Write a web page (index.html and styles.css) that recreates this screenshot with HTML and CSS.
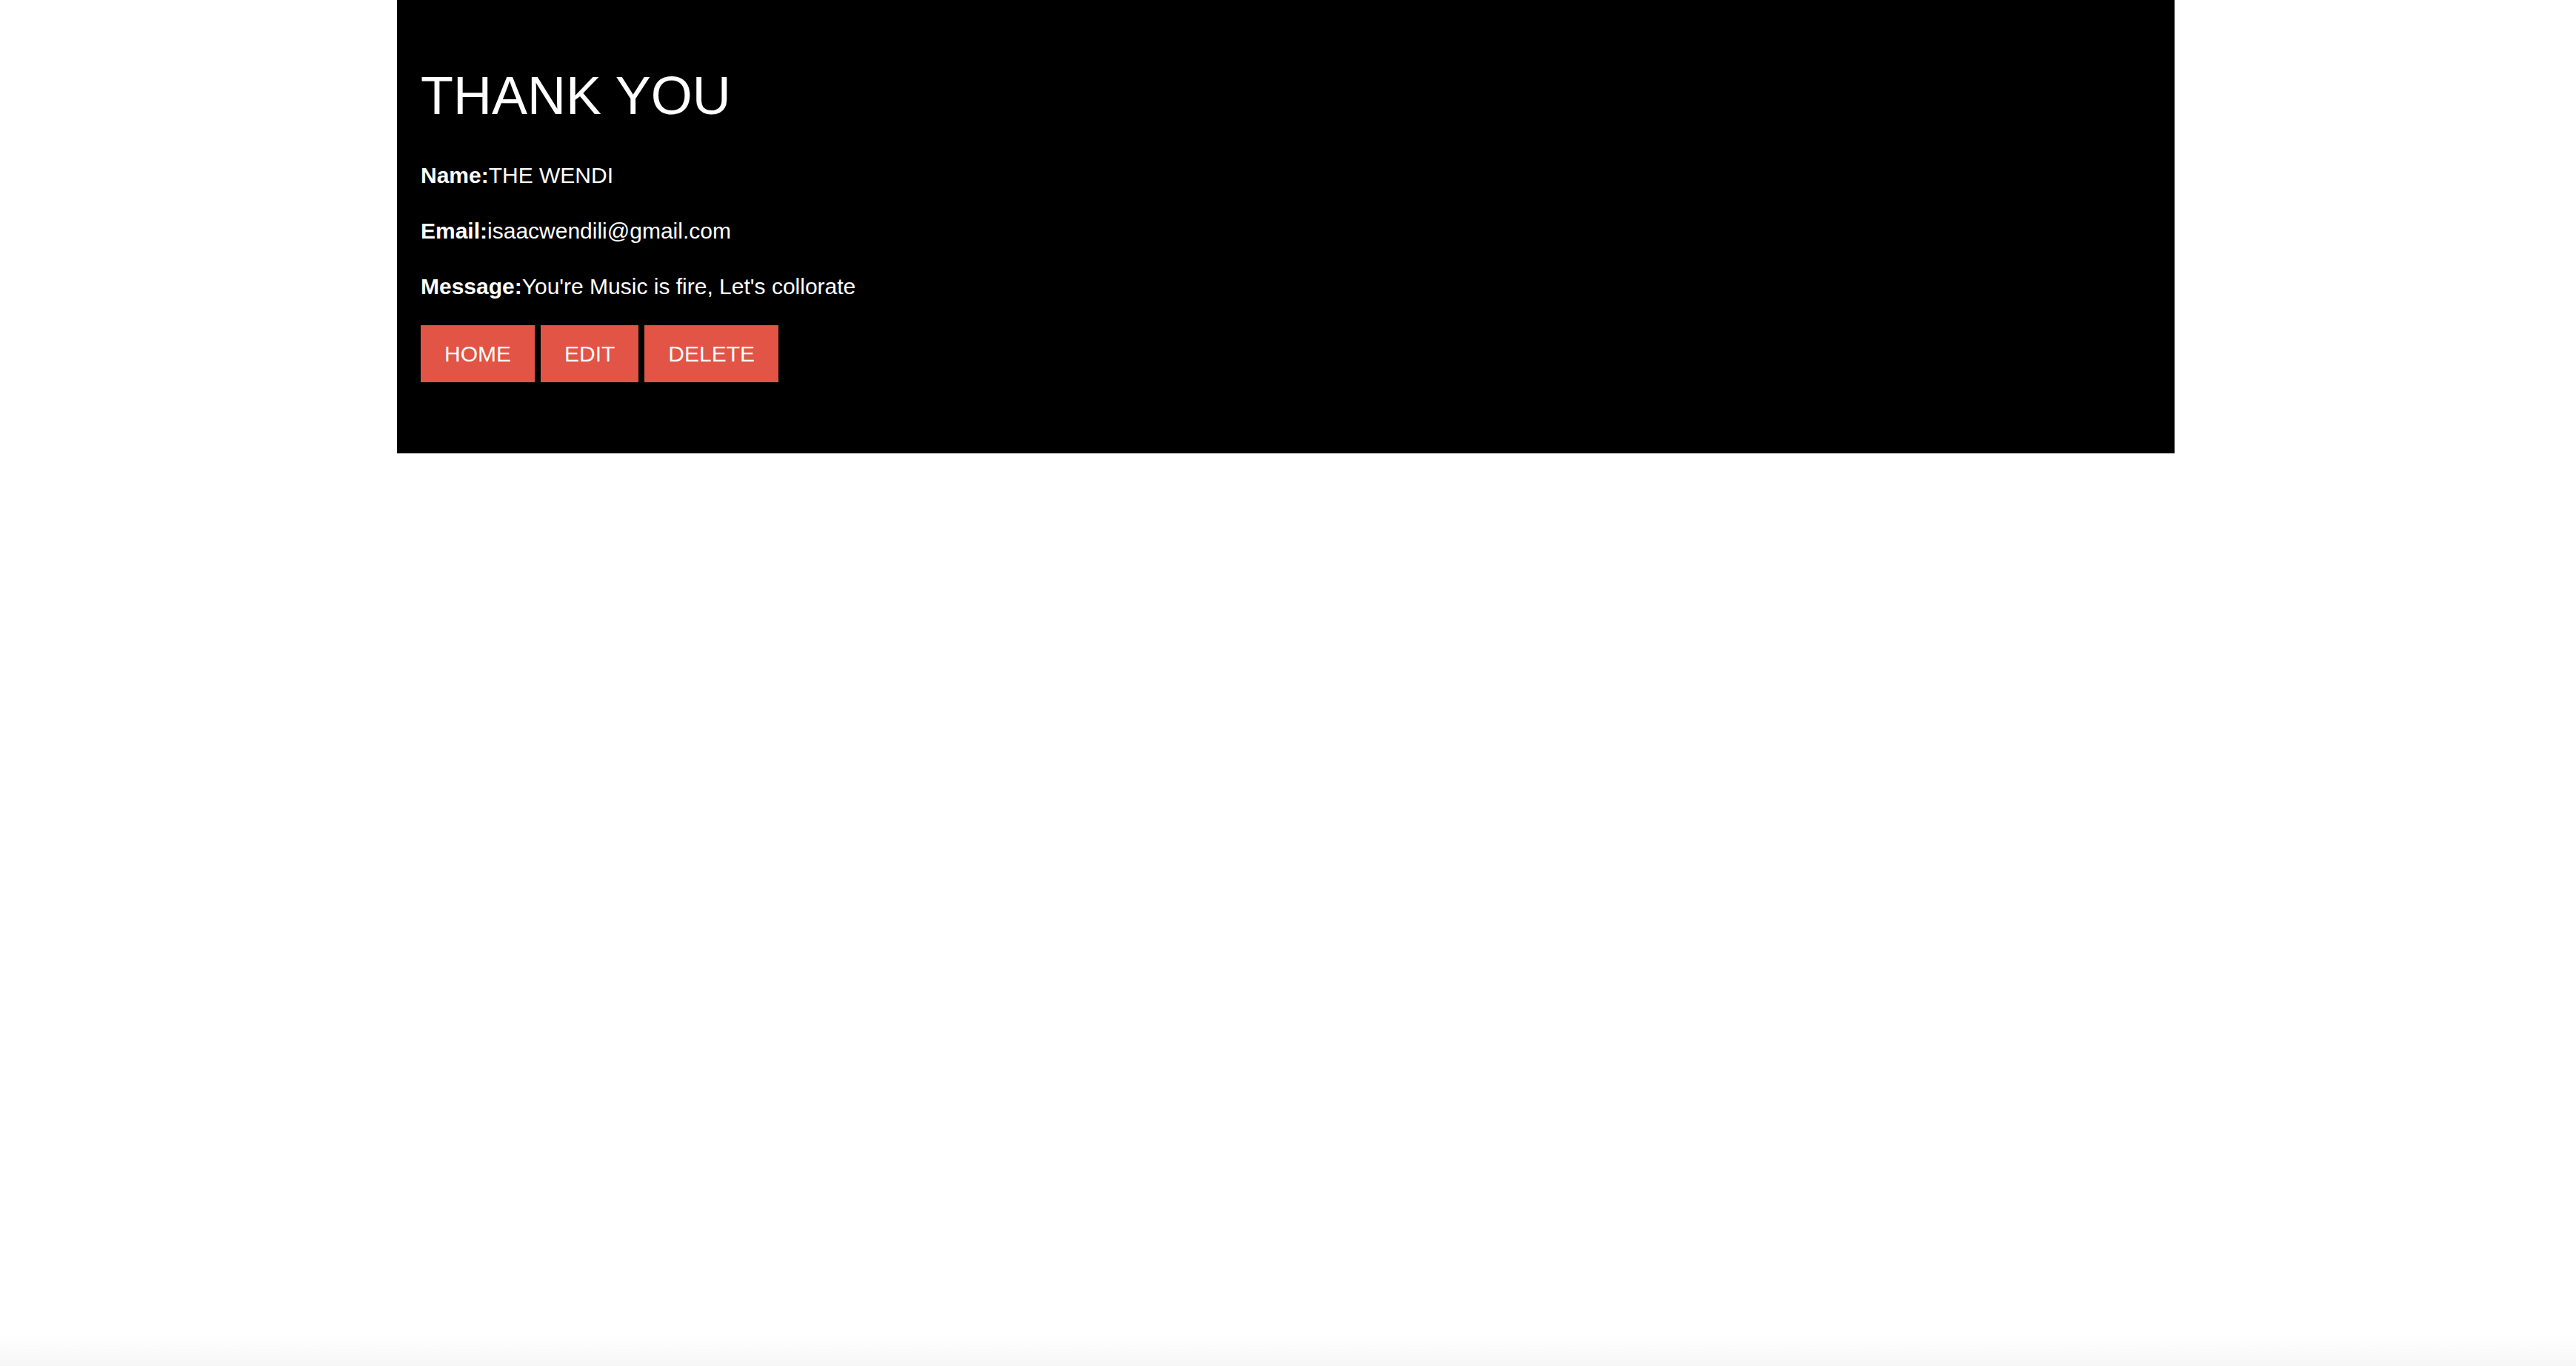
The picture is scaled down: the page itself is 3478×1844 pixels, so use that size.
FILE: index.html
```html
<!DOCTYPE html>
<html lang="en">
<head>
<meta charset="utf-8">
<title>Thank You</title>
<link rel="stylesheet" href="styles.css">
</head>
<body>
<main class="card">
  <h1 class="title">THANK YOU</h1>
  <div class="details">
    <p class="row"><strong>Name:</strong>THE WENDI</p>
    <p class="row"><strong>Email:</strong>isaacwendili@gmail.com</p>
    <p class="row"><strong>Message:</strong>You're Music is fire, Let's collorate</p>
  </div>
  <div class="actions">
    <a class="btn" href="#">HOME</a>
    <a class="btn" href="#">EDIT</a>
    <a class="btn" href="#">DELETE</a>
  </div>
</main>
<div class="bottom-fade"></div>
</body>
</html>
```
FILE: styles.css
```css
html, body {
  margin: 0;
  padding: 0;
  background: #ffffff;
}
body {
  font-family: "Liberation Sans", Arial, Helvetica, sans-serif;
  color: #ffffff;
  min-height: 1844px;
}
.card {
  box-sizing: border-box;
  width: 2400px;
  margin-left: 536px;
  background: #000000;
  padding: 89px 32px 96px;
}
.title {
  margin: 0 0 51px;
  font-size: 72px;
  line-height: 80px;
  font-weight: 400;
}
.details {
  display: flex;
  flex-direction: column;
  gap: 41px;
}
.row {
  margin: 0;
  font-size: 30px;
  line-height: 34px;
}
.row strong {
  font-weight: 700;
}
.actions {
  display: flex;
  gap: 8px;
  margin-top: 35px;
}
.btn {
  display: block;
  height: 77px;
  line-height: 77px;
  padding: 0 32px;
  background: #e25445;
  color: #ffffff;
  font-size: 30px;
  text-decoration: none;
}
.bottom-fade {
  position: fixed;
  left: 0;
  right: 0;
  bottom: 0;
  height: 40px;
  background: linear-gradient(to bottom, rgba(240,240,240,0), rgba(240,240,240,0.6));
  pointer-events: none;
}
```
